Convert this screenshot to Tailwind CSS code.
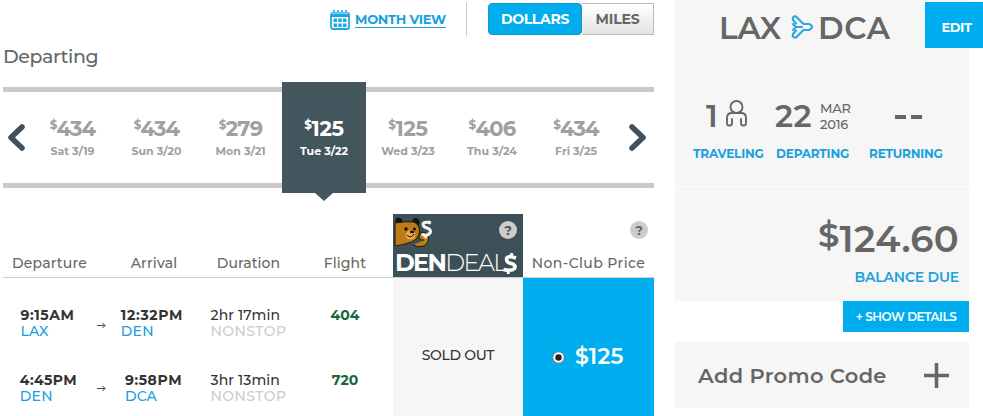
<!DOCTYPE html>
<html lang="en">
<head>
    <meta charset="UTF-8">
    <meta name="viewport" content="width=device-width, initial-scale=1.0">
    <title>Select Flights</title>
    <script src="https://cdn.jsdelivr.net/npm/@tailwindcss/browser@4"></script>
</head>
<body class="bg-white font-[Montserrat,Inter,sans-serif] antialiased w-[983px] h-[416px] overflow-hidden text-[#666] whitespace-nowrap">
    <div class="flex items-start">

        <!-- Flight selection -->
        <main class="ml-[3px] w-[651px] shrink-0">
            <div class="flex justify-end items-start h-[42px] pt-[2px]">
                <a href="#" class="flex items-start text-[#1ba0de] mr-5">
                    <svg class="w-5 h-5 mt-2 mr-[5px]" viewBox="0 0 20 20" fill="none">
                        <rect x="1" y="3" width="18" height="16" rx="2" stroke="#1ba8e4" stroke-width="1.8"/>
                        <path d="M1 3h18v4H1z" fill="#1ba8e4"/>
                        <path d="M4 0v4M8 0v4M12 0v4M16 0v4" stroke="#fff" stroke-width="2.6"/>
                        <path d="M4 0v3.5M8 0v3.5M12 0v3.5M16 0v3.5" stroke="#1ba8e4" stroke-width="1.6"/>
                        <path d="M3.5 8.5h3.5v3.5h-3.5zM8.3 8.5h3.5v3.5h-3.5zM13 8.5h3.5v3.5h-3.5zM3.5 13.5h3.5v3.5h-3.5zM8.3 13.5h3.5v3.5h-3.5zM13 13.5h3.5v3.5h-3.5z" fill="#1ba8e4"/>
                    </svg>
                    <span class="mt-2 h-[18px] leading-[18px] w-[91px] border-b border-[#1ba0de] text-[13px] font-bold tracking-[-0.27px]">MONTH VIEW</span>
                </a>
                <div class="w-px h-[34px] bg-[#ccc] mr-[21px]"></div>
                <div class="flex h-8 mt-px text-[14px] font-bold leading-[31px] text-center">
                    <button class="w-[94px] rounded-[4px] bg-[#00adef] border border-[#1b93c4] text-white tracking-[-0.3px]">DOLLARS</button>
                    <button class="w-[72px] border border-l-0 border-[#bbb] bg-linear-to-b from-white to-[#e4e4e4] tracking-[-0.1px]">MILES</button>
                </div>
            </div>

            <h2 class="h-[45px] text-[19px] leading-[30px] font-medium tracking-[-0.4px]">Departing</h2>

            <div class="flex items-center h-[101px] border-y-[5px] border-[#cacaca] text-[#a0a0a0] text-center">
                <button class="w-7 pl-[5px]">
                    <svg class="w-[17px] h-[27px]" viewBox="0 0 17 27" fill="none" stroke="#3f515a" stroke-width="5.5" stroke-linecap="round" stroke-linejoin="round"><path d="M14 3 3 13.500 14 24"/></svg>
                </button>
                <div class="w-[84px] pt-1 pr-px">
                    <p class="text-[21px] leading-[23px] font-bold tracking-[-0.9px]"><sup class="text-[12px] top-[-7px]">$</sup>434</p>
                    <p class="text-[11px] leading-[22px] font-bold">Sat 3/19</p>
                </div>
                <div class="w-[84px] pt-1 pr-px">
                    <p class="text-[21px] leading-[23px] font-bold tracking-[-0.9px]"><sup class="text-[12px] top-[-7px]">$</sup>434</p>
                    <p class="text-[11px] leading-[22px] font-bold">Sun 3/20</p>
                </div>
                <div class="w-[83px] pt-1">
                    <p class="text-[21px] leading-[23px] font-bold tracking-[-0.7px]"><sup class="text-[12px] top-[-7px]">$</sup>279</p>
                    <p class="text-[11px] leading-[22px] font-bold">Mon 3/21</p>
                </div>
                <div class="relative flex flex-col justify-center w-[84px] h-[111px] pt-1 bg-[#43555d] text-white">
                    <p class="text-[21px] leading-[23px] font-bold tracking-[-0.3px]"><sup class="text-[12px] top-[-7px]">$</sup>125</p>
                    <p class="text-[11px] leading-[22px] font-bold">Tue 3/22</p>
                    <svg class="absolute left-[33px] top-[111px] w-[18px] h-2" viewBox="0 0 18 8"><path d="M0 0h18L9 8z" fill="#43555d"/></svg>
                </div>
                <div class="w-[84px] pt-1">
                    <p class="text-[21px] leading-[23px] font-bold tracking-[-0.3px]"><sup class="text-[12px] top-[-7px]">$</sup>125</p>
                    <p class="text-[11px] leading-[22px] font-bold">Wed 3/23</p>
                </div>
                <div class="w-[84px] pt-1">
                    <p class="text-[21px] leading-[23px] font-bold tracking-[-0.7px]"><sup class="text-[12px] top-[-7px]">$</sup>406</p>
                    <p class="text-[11px] leading-[22px] font-bold">Thu 3/24</p>
                </div>
                <div class="w-[84px] pt-1">
                    <p class="text-[21px] leading-[23px] font-bold tracking-[-0.9px]"><sup class="text-[12px] top-[-7px]">$</sup>434</p>
                    <p class="text-[11px] leading-[22px] font-bold">Fri 3/25</p>
                </div>
                <button class="w-9 pl-[11px]">
                    <svg class="w-[17px] h-[27px]" viewBox="0 0 17 27" fill="none" stroke="#3f515a" stroke-width="5.5" stroke-linecap="round" stroke-linejoin="round"><path d="M3 3l11 10.500L3 24"/></svg>
                </button>
            </div>

            <!-- Column headings -->
            <div class="grid grid-cols-[93px_12px_92px_97px_96px_130px_131px] items-end mt-[26px] h-16 border-b border-[#ccc] text-[14px] leading-7 font-medium text-center">
                <span class="tracking-[0.2px]">Departure</span>
                <span></span>
                <span class="tracking-[0.2px]">Arrival</span>
                <span class="tracking-[0.1px]">Duration</span>
                <span class="tracking-[0.1px]">Flight</span>
                <div class="h-[63px] bg-[#3d4f57] flex flex-col">
                    <div class="flex justify-between h-[34px]">
                        <svg class="w-[42px] h-[34px]" viewBox="0 0 42 34">
                            <path d="M3 10Q1 4 5 3.500q5 0 5 6.500zM19 9q0-5 4-5 5 1 3 8z" fill="#15120f"/>
                            <path d="M2 9q10-2 19-1 6 3 5.500 10-1 7-8 10-8 3-16.500 4z" fill="#bd7b18" stroke="#1c1713"/>
                            <circle cx="13" cy="15" r="1.7" fill="#15120f"/><circle cx="21.5" cy="15" r="1.5" fill="#15120f"/>
                            <ellipse cx="17.5" cy="21" rx="4.8" ry="4.5" fill="#eaa854"/>
                            <ellipse cx="19" cy="18" rx="2.2" ry="1.3" fill="#15120f"/>
                            <path d="M14 21q4 4 7-1" fill="none" stroke="#15120f"/>
                            <path d="M20 31q5 3 11 1 6-4 4-10-2-4-6-4-4 2-3 6 2 3 5 2" fill="#bd7b18" stroke="#1c1713"/>
                            <path d="M38 9q-7-2-8 1 0 3 4 4 5 2 3 5-3 4-8 1M37 7l-1 2M33 22l-1 2" fill="none" stroke="#f4f4f4" stroke-width="3"/>
                        </svg>
                        <span class="mt-[7px] mr-[6px] w-[18px] h-[18px] rounded-full bg-[#ccc] text-[#555] text-[13px] font-bold leading-[18px]">?</span>
                    </div>
                    <div class="flex items-center h-[29px] pl-[2px] text-white text-[24px] leading-[29px]">
                        <span class="font-bold tracking-[-1.7px]">DEN</span>
                        <span class="font-light tracking-[-1.6px]">DEAL</span>
                        <svg class="w-[15px] h-[21px] ml-[-3px] mt-[2px]" viewBox="0 0 15 21" fill="none" stroke="#fff"><path d="M13 5Q4 2 3.500 6q0 4 5 4.500 5 2 3 5-3 3-11 1" stroke-width="3.6"/><path d="M9 0 8 3M6 17l-1 4" stroke-width="3"/></svg>
                    </div>
                </div>
                <div class="flex flex-col items-end">
                    <span class="mr-[6px] mb-[10px] w-[18px] h-[18px] rounded-full bg-[#ccc] text-[#666] text-[13px] font-bold leading-[18px]">?</span>
                    <span class="w-full tracking-[0.4px]">Non-Club Price</span>
                </div>
            </div>

            <div class="flex h-[138px]">
                <!-- Flight legs -->
                <div class="w-[390px] pt-[29px] text-[14px] leading-4 font-medium text-[#333]">
                    <div class="grid grid-cols-[93px_12px_92px_97px_96px] justify-items-center h-[65px]">
                        <div class="-ml-[4px]"><p class="font-bold tracking-[0.6px]">9:15AM</p><p class="text-[#1ba0de] tracking-[0.2px]">LAX</p></div>
                        <svg class="w-[10px] h-[7px] mt-[15px]" viewBox="0 0 10 7" fill="none" stroke="#444"><path d="M0 3.500h8M5.500 1 8 3.500 5.500 6"/></svg>
                        <div class="-ml-[4px]"><p class="font-bold tracking-[0.7px]">12:32PM</p><p class="text-[#1ba0de] tracking-[0.2px]">DEN</p></div>
                        <div><p class="tracking-[0.1px]">2hr 17min</p><p class="text-[#ccc] tracking-[0.4px]">NONSTOP</p></div>
                        <p class="font-bold text-[#17663f]">404</p>
                    </div>
                    <div class="grid grid-cols-[93px_12px_92px_97px_96px] justify-items-center">
                        <div class="-ml-[2px]"><p class="font-bold tracking-[0.4px]">4:45PM</p><p class="text-[#1ba0de] tracking-[0.2px]">DEN</p></div>
                        <svg class="w-[10px] h-[7px] mt-[13px]" viewBox="0 0 10 7" fill="none" stroke="#444"><path d="M0 3.500h8M5.500 1 8 3.500 5.500 6"/></svg>
                        <div class="-ml-[1px]"><p class="font-bold tracking-[0.6px]">9:58PM</p><p class="text-[#1ba0de] tracking-[0.2px]">DCA</p></div>
                        <div><p class="tracking-[0.1px]">3hr 13min</p><p class="text-[#ccc] tracking-[0.4px]">NONSTOP</p></div>
                        <p class="font-bold text-[#17663f]">720</p>
                    </div>
                </div>
                <div class="w-[130px] bg-[#f6f6f6] pt-[67px] text-center text-[14px] leading-5 font-medium tracking-[-0.3px] text-[#333]">SOLD OUT</div>
                <div class="flex items-start w-[131px] bg-[#00adef] pt-[64px] pl-[29px] text-white">
                    <svg class="w-[13px] h-[13px] mt-[9px] mr-[10px]" viewBox="0 0 13 13"><circle cx="6.5" cy="6.5" r="5.7" fill="#fff" stroke="#777"/><circle cx="6.5" cy="6.5" r="3.2" fill="#222"/></svg>
                    <span class="text-[22px] leading-[30px] font-semibold tracking-[0.2px]">$125</span>
                </div>
            </div>
        </main>

        <!-- Trip summary -->
        <aside class="ml-[21px] w-[294px] shrink-0">
            <section class="relative h-[186px] bg-[#f6f6f6]">
                <h1 class="flex items-center h-14 pl-[44px] text-[31px] font-semibold">
                    <span class="w-[72px]">LAX</span>
                    <svg class="w-[22px] h-6 mt-[-2px] mr-[5px]" viewBox="0 0 22 24" fill="none" stroke="#2aa7e5" stroke-width="2.2" stroke-linejoin="round" stroke-linecap="round"><path d="M5 8.500 2 5Q1 1 5 1.500L12.500 9H18q3 1 3 3t-3 3h-5.500L5 22.500Q1 23 2 19l3-3.500"/><path d="M11 12H5L2 9M5 12l-3 3"/></svg>
                    <span class="tracking-[0.7px]">DCA</span>
                </h1>
                <a href="#" class="absolute left-[250px] top-[2px] w-[58px] h-[46px] pl-[5px] bg-[#00adef] text-center text-white text-[13px] leading-[50px] font-bold tracking-[-0.4px]">EDIT</a>
                <div class="flex items-center h-[30px] mt-[44px] text-[31px]">
                    <span class="pl-[31px] w-[51px] mt-[2px] font-semibold leading-[30px]">1</span>
                    <svg class="w-[21px] h-7 mt-[-5px]" viewBox="0 0 21 28" fill="none" stroke="#666" stroke-width="1.9" stroke-linecap="round"><circle cx="10.5" cy="8" r="6"/><path d="M4 26.500H3Q1 26.500 1 24v-5q0-5 5-5h9q5 0 5 5v5q0 2.500-2 2.500h-1M6 20v4q0 2.500-2 2.500M15 20v4q0 2.500 2 2.500"/></svg>
                    <span class="ml-[28px] w-[45px] mt-[2px] font-semibold leading-[30px] tracking-[0.4px]">22</span>
                    <span class="text-[13px] leading-4 font-medium mt-[2px] tracking-[-0.2px]">MAR<br>2016</span>
                    <span class="ml-[44px] mt-1 flex gap-[5px]"><i class="w-[11px] h-[4px] bg-[#666]"></i><i class="w-[11px] h-[4px] bg-[#666]"></i></span>
                </div>
                <div class="flex mt-[14px] pl-[18px] text-[#1ba0de] text-[12px] leading-5 font-bold tracking-[-0.15px]">
                    <span class="w-[83px]">TRAVELING</span>
                    <span class="w-[93px]">DEPARTING</span>
                    <span>RETURNING</span>
                </div>
            </section>
            <section class="mt-px h-[114px] pr-[10px] bg-[#f6f6f6] text-right">
                <p class="pt-[32px] text-[37px] leading-10 font-semibold tracking-[0.3px]"><sup class="text-[34px] top-[-5px]">$</sup>124.60</p>
                <p class="mt-[8px] text-[#1ba0de] text-[14px] leading-5 font-semibold tracking-[-0.2px]">BALANCE DUE</p>
            </section>
            <button class="block ml-auto w-[126px] h-[31px] bg-[#00adef] text-white text-[12px] font-semibold tracking-[-0.45px]">+ SHOW DETAILS</button>
            <section class="flex items-center justify-between mt-[10px] h-[66px] pl-[23px] pr-5 bg-[#f6f6f6]">
                <span class="text-[21px] font-semibold tracking-[0.3px] mt-px">Add Promo Code</span>
                <svg class="w-[25px] h-[25px]" viewBox="0 0 25 25" stroke="#666" stroke-width="3.5"><path d="M12.500 0v25M0 12.500h25"/></svg>
            </section>
        </aside>
    </div>
</body>
</html>
